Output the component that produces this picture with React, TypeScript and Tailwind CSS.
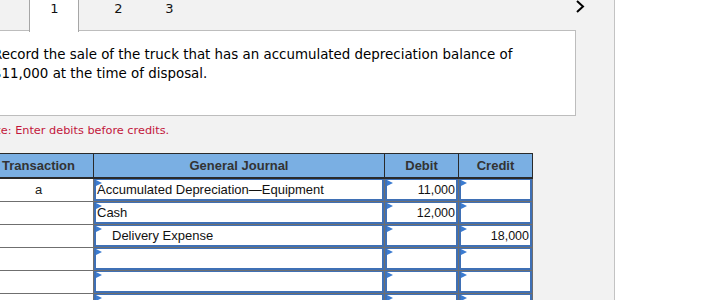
import React from 'react'

type Line = { account: string, indent?: boolean, debit?: string, credit?: string, tx?: string }

const lines: Line[] = [
  { tx: 'a', account: 'Accumulated Depreciation\u2014Equipment', debit: '11,000' },
  { account: 'Cash', debit: '12,000' },
  { account: 'Delivery Expense', indent: true, credit: '18,000' },
  { account: '' },
  { account: '' },
  { account: '' },
]

function Flag() {
  return (
    <svg width="6" height="7" viewBox="0 0 6 7" className="absolute left-0 top-0">
      <polygon points="0,0 6,3 0,6" fill="#3b7bd0" />
    </svg>
  )
}

function Field({ value, align = 'left', indent }: { value?: string, align?: 'left' | 'right', indent?: boolean }) {
  return (
    <div className="relative h-[22px] border-x-2 border-b-2 border-t border-[#3f70b5] bg-white">
      <Flag />
      <div className={`h-full leading-[20px] text-[#111] ${align === 'right' ? 'text-right pr-[1px] text-[12.5px]' : indent ? 'pl-[16px] text-[13px]' : 'pl-[1px] text-[13px]'}`}>
        {value}
      </div>
    </div>
  )
}

export default function App() {
  return (
    <div className="flex w-[708px] h-[300px] overflow-hidden bg-white">
      <div className="w-[615px] shrink-0 h-full bg-[#f2f2f2] border-r border-[#c3c3c3] overflow-hidden">
        {/* step tabs */}
        <div className="flex items-start h-[31px] text-[13px] text-[#111]" style={{ fontFamily: '"DejaVu Sans", Verdana, sans-serif' }}>
          <div className="w-[29px] shrink-0" />
          <div className="relative z-10 w-[50px] h-[32px] shrink-0 bg-white border-x border-[#a6a6a6] text-center pl-[1px] pt-[1px] leading-[16px]">1</div>
          <div className="w-[78px] shrink-0 text-center pt-[1px] pl-[1px] leading-[16px]">2</div>
          <div className="w-[24px] shrink-0 text-center pt-[1px] pl-[1px] leading-[16px]">3</div>
          <div className="flex-1" />
          <svg width="12" height="14" viewBox="0 0 12 14" className="mr-[29px]">
            <polyline points="4,1 10,6.5 4,12" fill="none" stroke="#000" strokeWidth="2" />
          </svg>
        </div>

        <div className="-ml-[30px]">
          <div className="w-[606px] h-[86px] bg-white border border-[#bdbdbd] -mt-px pl-[22px] pt-[14px] text-[13.4px] leading-[19px] text-black" style={{ fontFamily: '"DejaVu Sans", Verdana, sans-serif' }}>
            Record the sale of the truck that has an accumulated depreciation balance of<br />
            $11,000 at the time of disposal.
          </div>

          <div className="pl-[11px] pt-[7px] h-[37px] text-[11.3px] leading-[15px] text-[#c2163b]" style={{ fontFamily: '"DejaVu Sans", Verdana, sans-serif' }}>
            Note: Enter debits before credits.
          </div>

          <table className="ml-[13px] border-collapse table-fixed" style={{ fontFamily: '"Liberation Sans", Arial, sans-serif' }}>
            <colgroup>
              <col className="w-[110px]" />
              <col className="w-[291px]" />
              <col className="w-[74px]" />
              <col className="w-[74px]" />
            </colgroup>
            <thead>
              <tr className="bg-[#7aafe3] text-[13px] font-bold text-[#333]">
                <th className="h-[24px] border border-[#2a2a2a] border-b-2 font-bold text-center p-0">Transaction</th>
                <th className="border border-[#2a2a2a] border-b-2 font-bold text-center p-0">General Journal</th>
                <th className="border border-[#2a2a2a] border-b-2 font-bold text-center p-0">Debit</th>
                <th className="border border-[#2a2a2a] border-b-2 font-bold text-center p-0">Credit</th>
              </tr>
            </thead>
            <tbody>
              {lines.map((l, i) => (
                <tr key={i}>
                  <td className="h-[22px] bg-white border border-[#6f6f6f] text-center text-[13px] text-[#222] p-0">{l.tx}</td>
                  <td className="border border-[#6f6f6f] p-0"><Field value={l.account} indent={l.indent} /></td>
                  <td className="border border-[#6f6f6f] p-0"><Field value={l.debit} align="right" /></td>
                  <td className="border border-[#6f6f6f] p-0"><Field value={l.credit} align="right" /></td>
                </tr>
              ))}
            </tbody>
          </table>
        </div>
      </div>
      <div className="flex-1" />
    </div>
  )
}
